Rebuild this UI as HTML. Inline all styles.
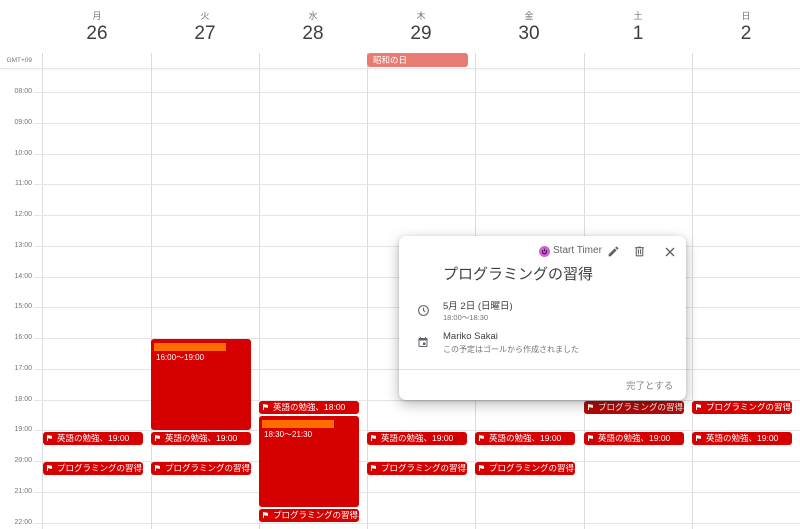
<!DOCTYPE html>
<html><head><meta charset="utf-8"><style>
*{margin:0;padding:0;box-sizing:border-box}
body{width:800px;height:529px;overflow:hidden;background:#fff;font-family:"Liberation Sans","Noto Sans CJK JP",sans-serif;position:relative;color:#3c4043}
.a{position:absolute}
.dn{position:absolute;top:9px;width:108px;text-align:center;font-size:9px;color:#70757a}
.dd{position:absolute;top:23px;width:108px;text-align:center;font-size:19px;color:#3c4043}
.vl{position:absolute;top:53px;bottom:0;width:1px;background:#dadce0}
.hl{position:absolute;left:34px;right:0;height:1px;background:#e3e4e6}
.ht{position:absolute;left:0;width:32px;text-align:right;font-size:7px;color:#70757a}
.chip{position:absolute;height:13px;background:#d50000;color:#fff;font-size:8.5px;line-height:13px;border-radius:3px;padding-left:4px;white-space:nowrap;overflow:hidden;width:100px}
.chip:before{content:"";display:inline-block;width:5px;height:6px;background:#fff;margin-right:5px;vertical-align:-0px;clip-path:polygon(0 0,100% 15%,100% 65%,20% 55%,20% 100%,0 100%)}
.ev{position:absolute;background:#d50000;border-radius:3px;width:100px;color:#fff;font-size:8px}
.ev .bar{position:absolute;left:3px;top:4px;width:72px;height:8px;background:#ff6d00}
.ev .t{position:absolute;left:5px;top:13px}
</style></head><body>
<div class="dn" style="left:43px">月</div><div class="dd" style="left:43px">26</div>
<div class="dn" style="left:151px">火</div><div class="dd" style="left:151px">27</div>
<div class="dn" style="left:259px">水</div><div class="dd" style="left:259px">28</div>
<div class="dn" style="left:367px">木</div><div class="dd" style="left:367px">29</div>
<div class="dn" style="left:475px">金</div><div class="dd" style="left:475px">30</div>
<div class="dn" style="left:584px">土</div><div class="dd" style="left:584px">1</div>
<div class="dn" style="left:692px">日</div><div class="dd" style="left:692px">2</div>
<div class="vl" style="left:42px"></div><div class="vl" style="left:151px"></div><div class="vl" style="left:259px"></div><div class="vl" style="left:367px"></div><div class="vl" style="left:475px"></div><div class="vl" style="left:584px"></div><div class="vl" style="left:692px"></div>
<div class="ht" style="top:57px;font-size:6.5px">GMT+09</div>
<div class="a" style="left:0;right:0;top:68px;height:1px;background:#e6e6e6;box-shadow:0 1px 2px rgba(0,0,0,.08)"></div>
<div class="a" style="left:367px;top:53px;width:101px;height:14px;background:#e67c73;border-radius:3px;color:#fff;font-size:8.5px;line-height:14px;padding-left:6px">昭和の日</div>

<div class="hl" style="top:92px"></div><div class="ht" style="top:88px">08:00</div>
<div class="hl" style="top:123px"></div><div class="ht" style="top:119px">09:00</div>
<div class="hl" style="top:154px"></div><div class="ht" style="top:150px">10:00</div>
<div class="hl" style="top:184px"></div><div class="ht" style="top:180px">11:00</div>
<div class="hl" style="top:215px"></div><div class="ht" style="top:211px">12:00</div>
<div class="hl" style="top:246px"></div><div class="ht" style="top:242px">13:00</div>
<div class="hl" style="top:277px"></div><div class="ht" style="top:273px">14:00</div>
<div class="hl" style="top:307px"></div><div class="ht" style="top:303px">15:00</div>
<div class="hl" style="top:338px"></div><div class="ht" style="top:334px">16:00</div>
<div class="hl" style="top:369px"></div><div class="ht" style="top:365px">17:00</div>
<div class="hl" style="top:400px"></div><div class="ht" style="top:396px">18:00</div>
<div class="hl" style="top:430px"></div><div class="ht" style="top:426px">19:00</div>
<div class="hl" style="top:461px"></div><div class="ht" style="top:457px">20:00</div>
<div class="hl" style="top:492px"></div><div class="ht" style="top:488px">21:00</div>
<div class="hl" style="top:523px"></div><div class="ht" style="top:519px">22:00</div>

<div class="ev" style="left:151px;top:339px;height:91px"><div class="bar"></div><div class="t">16:00〜19:00</div></div>
<div class="ev" style="left:259px;top:416px;height:91px"><div class="bar"></div><div class="t">18:30〜21:30</div></div>

<div class="chip" style="left:43px;top:432px">英語の勉強、19:00</div>
<div class="chip" style="left:43px;top:462px">プログラミングの習得、</div>
<div class="chip" style="left:151px;top:432px">英語の勉強、19:00</div>
<div class="chip" style="left:151px;top:462px">プログラミングの習得、</div>
<div class="chip" style="left:259px;top:401px">英語の勉強、18:00</div>
<div class="chip" style="left:259px;top:509px">プログラミングの習得、</div>
<div class="chip" style="left:367px;top:432px">英語の勉強、19:00</div>
<div class="chip" style="left:367px;top:462px">プログラミングの習得、</div>
<div class="chip" style="left:475px;top:432px">英語の勉強、19:00</div>
<div class="chip" style="left:475px;top:462px">プログラミングの習得、</div>
<div class="chip" style="left:584px;top:401px;background:#b30a0a">プログラミングの習得、</div>
<div class="chip" style="left:584px;top:432px">英語の勉強、19:00</div>
<div class="chip" style="left:692px;top:401px">プログラミングの習得、</div>
<div class="chip" style="left:692px;top:432px">英語の勉強、19:00</div>

<div class="a" style="left:399px;top:236px;width:287px;height:164px;background:#fff;border-radius:7px;box-shadow:0 4px 14px rgba(0,0,0,.28),0 1px 3px rgba(0,0,0,.15)">
 <div class="a" style="left:140px;top:10px;width:11px;height:11px;border-radius:50%;background:#d35fd6"></div>
 <svg class="a" style="left:142px;top:12px" width="7" height="7" viewBox="0 0 10 10"><path d="M3 3a3 3 0 1 0 4 0M5 1v4" stroke="#3a0a3a" stroke-width="1.4" fill="none"/></svg>
 <div class="a" style="left:154px;top:9px;font-size:10px;color:#5f6368">Start Timer</div>
 <svg class="a" style="left:208px;top:9px" width="13" height="13" viewBox="0 0 24 24"><path d="M3 17.25V21h3.75L17.81 9.94l-3.75-3.75L3 17.25zM20.71 7.04a1 1 0 0 0 0-1.41l-2.34-2.34a1 1 0 0 0-1.41 0l-1.83 1.83 3.75 3.75 1.83-1.83z" fill="#5f6368"/></svg>
 <svg class="a" style="left:234px;top:9px" width="13" height="13" viewBox="0 0 24 24"><path d="M15 4V3H9v1H4v2h1v13a2 2 0 0 0 2 2h10a2 2 0 0 0 2-2V6h1V4h-5zm2 15H7V6h10v13zM9 8h2v9H9zm4 0h2v9h-2z" fill="#5f6368"/></svg>
 <svg class="a" style="left:266px;top:11px" width="10" height="10" viewBox="0 0 10 10"><path d="M1 1l8 8M9 1l-8 8" stroke="#5f6368" stroke-width="1.4"/></svg>
 <div class="a" style="left:44px;top:27px;font-size:15px;color:#3c4043">プログラミングの習得</div>
 <svg class="a" style="left:18px;top:68px" width="13" height="13" viewBox="0 0 24 24"><circle cx="12" cy="12" r="9" stroke="#5f6368" stroke-width="2" fill="none"/><path d="M12 7v5l3.5 2" stroke="#5f6368" stroke-width="2" fill="none"/></svg>
 <div class="a" style="left:44px;top:62px;font-size:9.5px;color:#3c4043">5月 2日 (日曜日)</div>
 <div class="a" style="left:44px;top:76px;font-size:7.5px;color:#70757a">18:00〜18:30</div>
 <svg class="a" style="left:18px;top:100px" width="12" height="12" viewBox="0 0 24 24"><path d="M19 4h-1V2h-2v2H8V2H6v2H5a2 2 0 0 0-2 2v14a2 2 0 0 0 2 2h14a2 2 0 0 0 2-2V6a2 2 0 0 0-2-2zm0 16H5V9h14v11zm-7-7h5v5h-5z" fill="#5f6368"/></svg>
 <div class="a" style="left:44px;top:95px;font-size:9.5px;color:#3c4043">Mariko Sakai</div>
 <div class="a" style="left:44px;top:108px;font-size:8px;color:#70757a">この予定はゴールから作成されました</div>
 <div class="a" style="left:0;right:0;top:133px;height:1px;background:#e0e0e0"></div>
 <div class="a" style="left:227px;top:142px;font-size:9.5px;color:#80868b">完了とする</div>
</div>
</body></html>
